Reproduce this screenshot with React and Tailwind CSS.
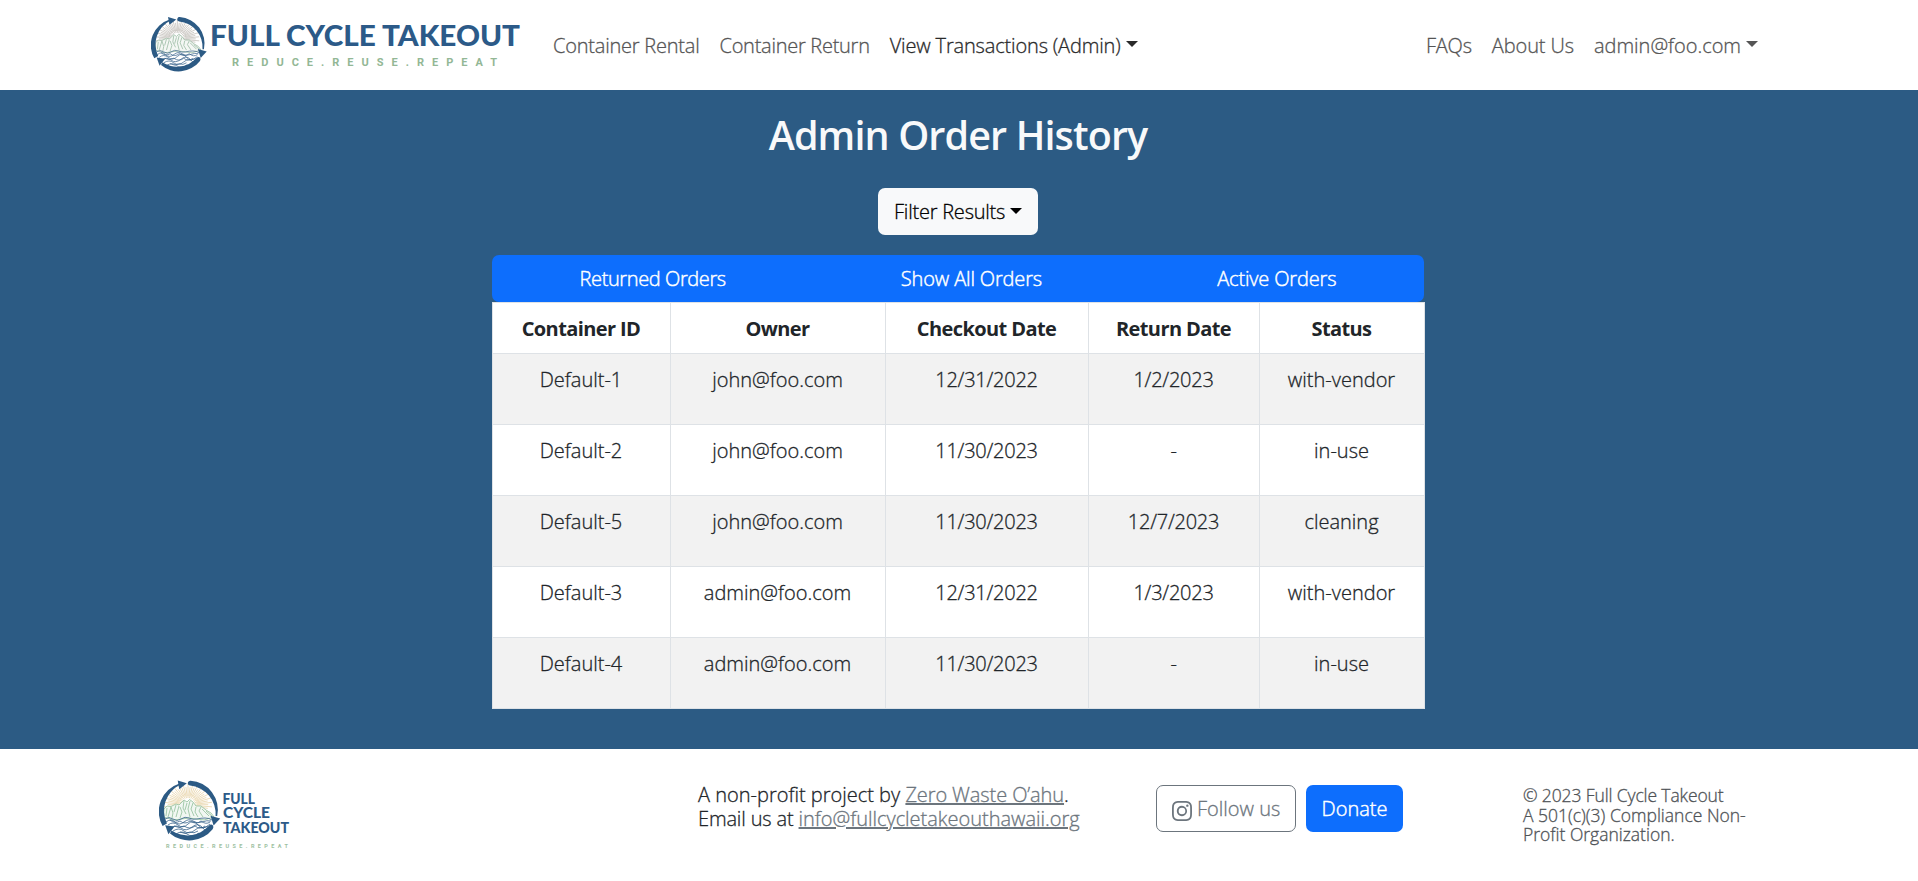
import { BsInstagram } from 'react-icons/bs';

const thin = 'font-light [-webkit-text-stroke:0.3px_currentColor]';

const orders = [
  ['Default-1', 'john@foo.com', '12/31/2022', '1/2/2023', 'with-vendor'],
  ['Default-2', 'john@foo.com', '11/30/2023', '-', 'in-use'],
  ['Default-5', 'john@foo.com', '11/30/2023', '12/7/2023', 'cleaning'],
  ['Default-3', 'admin@foo.com', '12/31/2022', '1/3/2023', 'with-vendor'],
  ['Default-4', 'admin@foo.com', '11/30/2023', '-', 'in-use'],
];

const columns = [
  ['Container ID', 'w-[178px]', ''],
  ['Owner', 'w-[215px]', ''],
  ['Checkout Date', 'w-[203px]', 'tracking-[-0.25px]'],
  ['Return Date', 'w-[171px]', 'tracking-[-0.25px]'],
  ['Status', 'w-[165px]', ''],
];

function Caret({ lift = 'mb-[2px]' }) {
  return (
    <svg className={`ml-[5px] h-[6px] w-[12px] shrink-0 ${lift}`} viewBox="0 0 12 6" fill="currentColor">
      <path d="M0 0H12L6 6Z" />
    </svg>
  );
}

/* Round emblem on a 60x60 grid: rays, mountains, waves and the three cycle arrows. */
function Emblem({ rays, raysOpacity, land, landFill }) {
  const lines = [];
  const count = 34;
  for (let i = 0; i <= count; i++) {
    const a = Math.PI * (1.06 - (i * 1.12) / count);
    const inner = i % 2 ? 7 : 9;
    const outer = i % 2 ? 21.5 : 18;
    lines.push(
      <line
        key={i}
        x1={29 + inner * Math.cos(a)}
        y1={25 - inner * Math.sin(a)}
        x2={29 + outer * 1.12 * Math.cos(a)}
        y2={25 - outer * Math.sin(a)}
      />
    );
  }
  return (
    <>
      <g stroke={rays} strokeWidth="0.8" opacity={raysOpacity}>{lines}</g>
      <g fill="none" stroke={land} strokeWidth="0.9" strokeLinejoin="round">
        <path fill={landFill} d="M4.5 37L5 29L8 26L12 26.5L17 24L20 25L25 20L28 22L30.5 19.5L34 22L37 26L42 26L47 30L52 33L55 37L45 40L30 38L15 40Z" />
        <path d="M8 28L7 36M12 27L9 37M12 27L14 33L13 38M17 25L15 32M20 26L17 37M21 27L23 32L21 38M25 21L24 28L27 34M28 23L26 30M31 21L29 29L31 37M34 23L32 29L35 36M37 27L36 32L39 37M42 27L40 31L44 37M43 29L50 36M47 31L53 36" />
      </g>
      <g fill="none" stroke="#2c5a84" strokeWidth="0.75">
        <path d="M6 39Q10 36 14 39T22 39T30 38T38 39T46 38T53 40" />
        <path d="M7 42Q12 38 16 42T25 42T34 41T43 42T52 41" />
        <path d="M9 45Q14 41 19 45T29 44T39 45T51 44" />
        <path d="M12 48Q17 44 22 48T33 47T44 48L49 46" />
        <path d="M14 51Q20 47 25 51T36 50T46 50" />
        <path d="M17 54Q23 50 28 54T40 53" />
        <path d="M11 40Q16 44 21 41Q26 45 31 41Q37 45 42 41Q47 45 51 42M15 46Q20 49 25 46Q31 50 36 46Q41 50 46 46M21 52Q26 55 31 52Q35 54 39 51" />
      </g>
      <g fill="#2c5a84">
        <path d="M3.6 46A29.4 29.4 0 0 1 20.5 3.4L21 4.8A29 29 0 0 0 7.9 43.5Z" />
        <path d="M18.7 0.6L27.8 3.3L20.3 9.2Z" />
        <path d="M31.5 0.7A29.2 29.2 0 0 1 58.2 36L56.6 36A28.6 28.6 0 0 0 31 5.5Q28.2 4.9 29 2.2Q29.6 0.6 31.5 0.7Z" />
        <path d="M51.5 35.8L61.2 38.6L54.6 45.6Z" />
        <path d="M53.8 45.2Q55 47.2 53.6 49.2A29.8 29.8 0 0 1 11 53.4L12.5 50.5A28.5 28.5 0 0 0 49.6 46Q51.8 43.6 53.8 45.2Z" />
        <path d="M6.2 45.3L15.6 46.6L9.4 54.2Z" />
      </g>
    </>
  );
}

function HeaderLogo() {
  return (
    <svg className="h-[60px] w-[372px]" viewBox="0 0 372 60">
      <g transform="translate(0 1.4) scale(0.91)">
        <Emblem rays="#8b8378" raysOpacity="0.55" land="#9dbda6" landFill="#f4f7f4" />
      </g>
      <text x="59" y="31.2" textLength="310" lengthAdjust="spacingAndGlyphs" fill="#2c5a88" className="font-['Lato'] text-[29px] font-black">
        FULL CYCLE TAKEOUT
      </text>
      <text x="81" y="50.6" textLength="265" fill="#93b795" className="font-['Roboto'] text-[11px] font-bold">
        REDUCE.REUSE.REPEAT
      </text>
    </svg>
  );
}

function FooterLogo() {
  return (
    <svg className="h-[72px] w-[140px]" viewBox="0 0 140 72">
      <Emblem rays="#e6cf9f" raysOpacity="0.9" land="#9cc5a4" landFill="#f1f7f2" />
      <g fill="#2c5a88" className="font-['Lato'] text-[14.5px] font-black">
        <text x="63.5" y="23.7" textLength="32.5" lengthAdjust="spacingAndGlyphs">FULL</text>
        <text x="64" y="38.4" textLength="47" lengthAdjust="spacingAndGlyphs">CYCLE</text>
        <text x="64" y="53.4" textLength="66" lengthAdjust="spacingAndGlyphs">TAKEOUT</text>
      </g>
      <text x="7" y="68" textLength="122" fill="#9dbf9f" className="font-['Roboto'] text-[5.5px] font-bold">
        REDUCE.REUSE.REPEAT
      </text>
    </svg>
  );
}

function Header() {
  return (
    <header className={`flex h-[90px] items-center bg-white pl-[151px] pr-[160px] text-[#555] ${thin}`}>
      <HeaderLogo />
      <nav className="ml-[30px] flex flex-1 items-center gap-5 pt-[2px]">
        <a className="tracking-[-0.22px]">Container Rental</a>
        <a className="tracking-[-0.27px]">Container Return</a>
        <a className="flex items-center tracking-[-0.16px] text-[#2a2a2a]">
          View Transactions (Admin)
          <Caret lift="mb-[4px]" />
        </a>
      </nav>
      <nav className="flex items-center gap-5 pt-[2px]">
        <a className="tracking-[-0.2px]">FAQs</a>
        <a className="tracking-[-0.1px]">About Us</a>
        <a className="flex items-center tracking-[-0.03px]">
          admin@foo.com
          <Caret lift="mb-[4px]" />
        </a>
      </nav>
    </header>
  );
}

function OrderTable() {
  return (
    <table className="w-[932px] table-fixed border-collapse bg-white text-center text-[#212529]">
      <thead>
        <tr className="h-[51px]">
          {columns.map(([name, width]) => (
            <th key={name} className={`border border-[#dee2e6] pt-px font-bold tracking-[-0.6px] ${width}`}>
              {name}
            </th>
          ))}
        </tr>
      </thead>
      <tbody>
        {orders.map((row) => (
          <tr key={row[0]} className="h-[71px] odd:bg-[#f2f2f2]">
            {row.map((cell, i) => (
              <td key={i} className={`border border-[#dee2e6] pt-[11px] align-top ${columns[i][2]} ${thin}`}>
                {cell}
              </td>
            ))}
          </tr>
        ))}
      </tbody>
    </table>
  );
}

function Footer() {
  return (
    <footer className="grid h-[132px] grid-cols-[539px_458px_367px_260px] items-start bg-white pl-[159px]">
      <div className="pt-[31px]">
        <FooterLogo />
      </div>
      <div className={`pt-[34px] leading-6 whitespace-nowrap text-[#212529] ${thin}`}>
        <p>
          <span>A non-profit project by </span>
          <a className="tracking-[-0.1px] text-[#6c757d] underline">Zero Waste O’ahu</a>.
        </p>
        <p>
          <span className="tracking-[-0.15px]">Email us at </span>
          <a className="tracking-[-0.02px] text-[#6c757d] underline">info@fullcycletakeouthawaii.org</a>
        </p>
      </div>
      <div className={`flex gap-[10px] pt-[36px] ${thin}`}>
        <button className="flex h-[47px] w-[140px] items-center rounded-[7px] border border-[#6c757d] pl-[15px] text-[#6c757d]">
          <BsInstagram className="mt-[5px] mr-[5px] size-5 shrink-0" />
          Follow us
        </button>
        <button className="h-[47px] w-[97px] rounded-[7px] bg-[#0d6efd] text-white [-webkit-text-stroke:0.45px_currentColor]">Donate</button>
      </div>
      <p className={`pt-[37px] text-[17.5px] leading-[19.6px] text-[#4f5357] ${thin}`}>
        <span className="tracking-[-0.12px]">© 2023 Full Cycle Takeout</span>
        <br />
        A 501(c)(3) Compliance Non-
        <br />
        Profit Organization.
      </p>
    </footer>
  );
}

export default function App() {
  return (
    <div className="h-[881px] w-[1918px] overflow-hidden bg-white font-['Open_Sans','Noto_Sans',sans-serif] text-[20px] leading-[30px]">
      <Header />
      <main className="flex h-[659px] flex-col items-center bg-[#2c5b84] pt-[21px] pr-[2px]">
        <h1 className="text-[39.5px] leading-[48px] font-semibold tracking-[-0.88px] text-[#f8f9fa]">Admin Order History</h1>
        <button className={`mt-[29px] flex h-[47px] w-[160px] shrink-0 items-center rounded-[7px] bg-[#f8f9fa] pl-4 tracking-[-0.22px] whitespace-nowrap text-black ${thin}`}>
          Filter Results
          <Caret />
        </button>
        <div className="mt-5 flex h-[47px] w-[932px] shrink-0 rounded-[7px] bg-[#0d6efd] font-light text-white [-webkit-text-stroke:0.45px_currentColor]">
          <button className="grow tracking-[-0.4px]">Returned Orders</button>
          <button className="grow tracking-[-0.15px]">Show All Orders</button>
          <button className="grow tracking-[-0.15px]">Active Orders</button>
        </div>
        <OrderTable />
      </main>
      <Footer />
    </div>
  );
}
